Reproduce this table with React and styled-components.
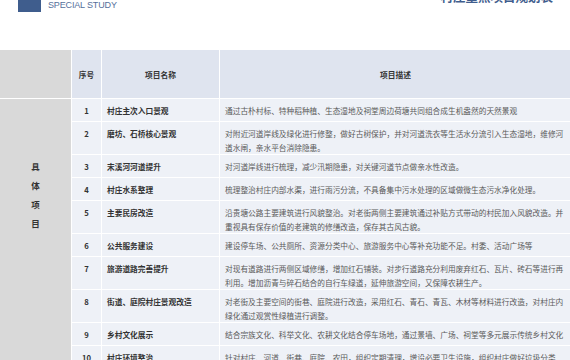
import React from "react";
import styled, { createGlobalStyle } from "styled-components";

const GlobalStyle = createGlobalStyle`
  html, body {
    margin: 0;
    padding: 0;
    background: #ffffff;
  }
  body {
    font-family: "Noto Sans CJK SC", "Noto Sans", sans-serif;
  }
`;

const Page = styled.div`
  width: 570px;
  height: 360px;
  overflow: hidden;
  background: #ffffff;
`;

const TopBar = styled.header`
  display: flex;
  justify-content: space-between;
  align-items: flex-start;
  height: 50px;
`;

const Brand = styled.div`
  display: flex;
  align-items: flex-start;
  gap: 7px;
  margin-left: 18px;
`;

const BrandMark = styled.div`
  width: 23px;
  height: 24px;
  margin-top: -12px;
  background: #3f5d8d;
  color: #ffffff;
  font-family: "Liberation Sans", Arial, sans-serif;
  font-weight: 700;
  font-size: 12px;
  line-height: 16px;
  text-align: center;
`;

const BrandText = styled.span`
  font-family: "Liberation Sans", Arial, sans-serif;
  font-size: 9px;
  line-height: 10px;
  color: #55709b;
  letter-spacing: -0.15px;
`;

const PageTitle = styled.h1`
  margin: -10px 17px 0 0;
  font-size: 12.5px;
  line-height: 14px;
  font-weight: 700;
  color: #3f5d8d;
`;

const Table = styled.table`
  width: 572px;
  table-layout: fixed;
  border-collapse: separate;
  border-spacing: 0;
  font-size: 7.7px;
`;

const Cell = styled.td`
  box-sizing: border-box;
  border-right: 1px solid #ffffff;
  border-bottom: 1px solid #ffffff;
  padding: 5px 5px 0;
  line-height: 13.5px;
  vertical-align: top;
  background: #eef1f7;
  color: #5a5a5a;
  white-space: nowrap;
  overflow: hidden;
`;

const HeadCell = styled.th`
  box-sizing: border-box;
  height: 49px;
  border-right: 1px solid #ffffff;
  border-bottom: 1px solid #ffffff;
  padding: 0;
  background: ${(p) => (p.$muted ? "#d9d9d9" : "#dfe4ef")};
  color: #333333;
  font-weight: 700;
  text-align: center;
  vertical-align: middle;
`;

const GroupCell = styled.td`
  border-right: 1px solid #ffffff;
  padding: 58px 0 0;
  background: #d9d9d9;
  vertical-align: top;
  text-align: center;
`;

const GroupChar = styled.span`
  display: block;
  font-size: 8.5px;
  line-height: 19px;
  font-weight: 700;
  color: #333333;
`;

const Row = styled.tr`
  height: ${(p) => (p.$lines > 1 ? 33 : 23)}px;
`;

const NumCell = styled(Cell)`
  padding-left: 0;
  padding-right: 0;
  text-align: center;
  font-weight: 700;
  color: #333333;
`;

const NameCell = styled(Cell)`
  font-weight: 700;
  color: #333333;
`;

const items = [
  {
    name: "村庄主次入口景观",
    desc: ["通过古朴村标、特种稻种植、生态湿地及祠堂周边荷塘共同组合成生机盎然的天然景观"],
  },
  {
    name: "磨坊、石桥核心景观",
    desc: [
      "对附近河道岸线及绿化进行修整，做好古树保护，并对河道洗衣等生活水分流引入生态湿地，维修河",
      "道水闸，亲水平台消除隐患。",
    ],
  },
  {
    name: "宋溪河河道提升",
    desc: ["对河道岸线进行梳理，减少汛期隐患，对关键河道节点做亲水性改造。"],
  },
  {
    name: "村庄水系整理",
    desc: ["梳理整治村庄内部水渠，进行雨污分流，不具备集中污水处理的区域做微生态污水净化处理。"],
  },
  {
    name: "主要民房改造",
    desc: [
      "沿贵塘公路主要建筑进行风貌整治。对老街两侧主要建筑通过补贴方式带动的村民加入风貌改造。并",
      "重视具有保存价值的老建筑的修缮改造，保存其古风古貌。",
    ],
  },
  {
    name: "公共服务建设",
    desc: ["建设停车场、公共厕所、资源分类中心、旅游服务中心等补充功能不足。村委、活动广场等"],
  },
  {
    name: "旅游道路完善提升",
    desc: [
      "对现有道路进行两侧区域修缮，增加红石铺装。对步行道路充分利用废弃红石、瓦片、砖石等进行再",
      "利用。增加沥青与碎石结合的自行车绿道，延伸旅游空间，又保障农耕生产。",
    ],
  },
  {
    name: "街道、庭院村庄景观改造",
    desc: [
      "对老街及主要空间的街巷、庭院进行改造，采用红石、青石、青瓦、木材等材料进行改造，对村庄内",
      "绿化通过观赏性绿植进行调整。",
    ],
  },
  {
    name: "乡村文化展示",
    desc: ["结合宗族文化、科举文化、农耕文化结合停车场地，通过景墙、广场、祠堂等多元展示传统乡村文化"],
  },
  {
    name: "村庄环境整治",
    desc: ["针对村庄、河道、街巷、庭院、农田，组织定期清理，增设必要卫生设施，组织村庄做好垃圾分类"],
  },
];

export default function App() {
  return (
    <Page>
      <GlobalStyle />
      <TopBar>
        <Brand>
          <BrandMark>04</BrandMark>
          <BrandText>SPECIAL STUDY</BrandText>
        </Brand>
        <PageTitle>村庄重点项目规划表</PageTitle>
      </TopBar>
      <Table>
        <colgroup>
          <col style={{ width: 72 }} />
          <col style={{ width: 30 }} />
          <col style={{ width: 118 }} />
          <col />
        </colgroup>
        <thead>
          <tr>
            <HeadCell $muted />
            <HeadCell>序号</HeadCell>
            <HeadCell>项目名称</HeadCell>
            <HeadCell>项目描述</HeadCell>
          </tr>
        </thead>
        <tbody>
          {items.map((item, i) => (
            <Row key={item.name} $lines={item.desc.length}>
              {i === 0 && (
                <GroupCell rowSpan={items.length}>
                  {"具体项目".split("").map((ch) => (
                    <GroupChar key={ch}>{ch}</GroupChar>
                  ))}
                </GroupCell>
              )}
              <NumCell>{i + 1}</NumCell>
              <NameCell>{item.name}</NameCell>
              <Cell>
                {item.desc.map((line, j) => (
                  <React.Fragment key={j}>
                    {j > 0 && <br />}
                    {line}
                  </React.Fragment>
                ))}
              </Cell>
            </Row>
          ))}
        </tbody>
      </Table>
    </Page>
  );
}
